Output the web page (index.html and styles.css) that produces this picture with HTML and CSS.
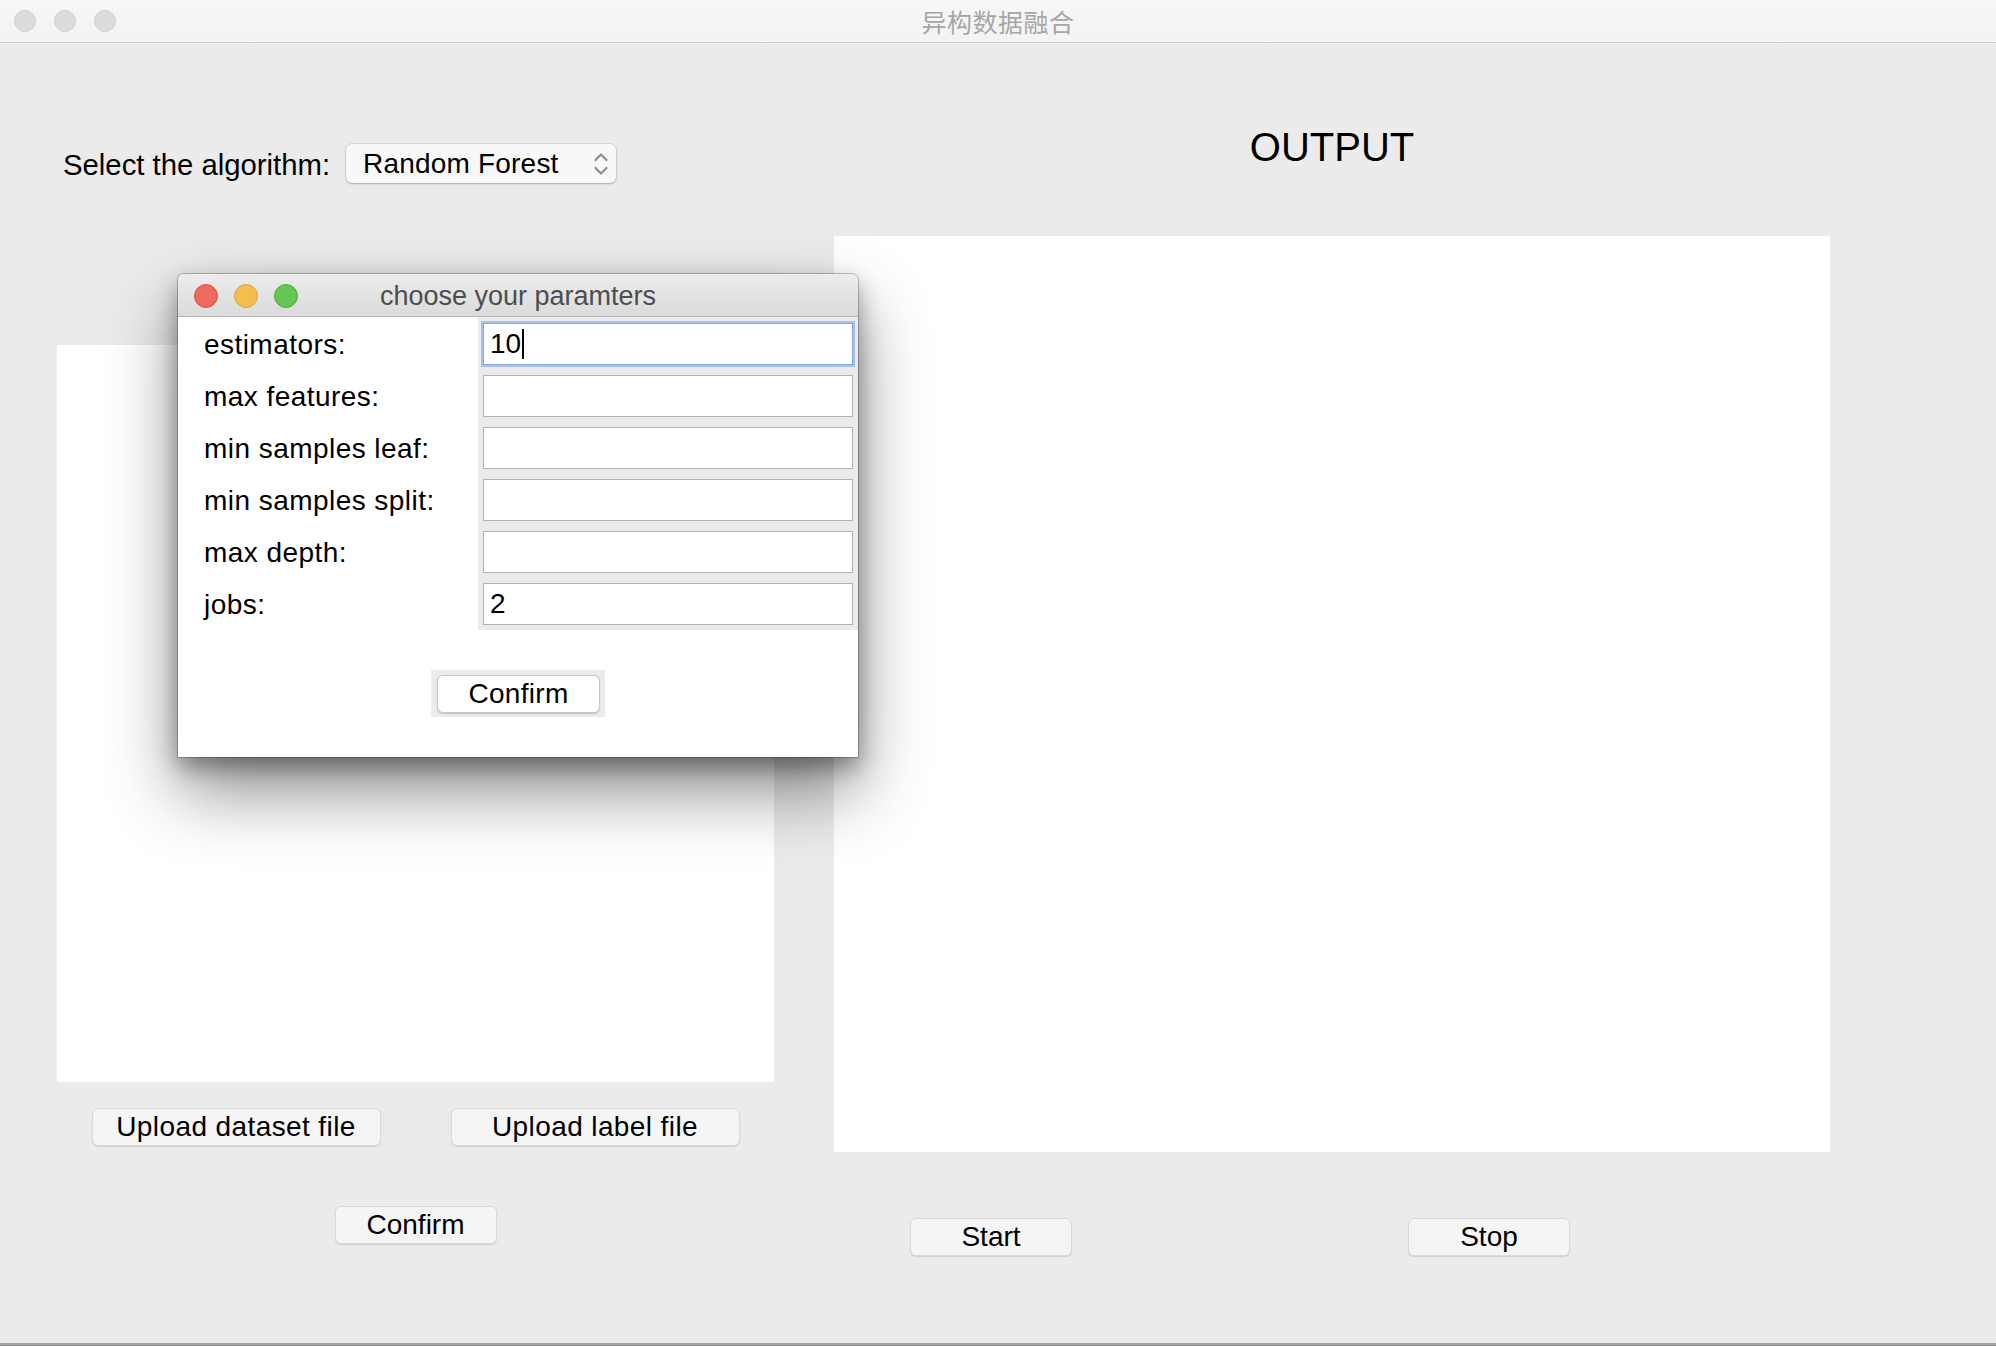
FILE: index.html
```html
<!DOCTYPE html>
<html lang="zh">
<head>
<meta charset="utf-8">
<title>异构数据融合</title>
<link rel="stylesheet" href="styles.css">
</head>
<body>
<div class="window">
  <div class="titlebar">
    <div class="lights">
      <span class="light gray"></span>
      <span class="light gray"></span>
      <span class="light gray"></span>
    </div>
    <div class="title">异构数据融合</div>
  </div>

  <div class="content">
    <div class="left-col">
      <div class="algo-row">
        <div class="algo-label">Select the algorithm:</div>
        <div class="combo">
          <span class="combo-text">Random Forest</span>
          <svg class="combo-arrows" width="16" height="26" viewBox="0 0 16 26">
            <path d="M2.5 9 L8 3.5 L13.5 9" fill="none" stroke="#8c8c8c" stroke-width="2.2" stroke-linecap="round" stroke-linejoin="round"/>
            <path d="M2.5 17 L8 22.5 L13.5 17" fill="none" stroke="#8c8c8c" stroke-width="2.2" stroke-linecap="round" stroke-linejoin="round"/>
          </svg>
        </div>
      </div>
      <div class="panel input-panel"></div>
      <div class="upload-row">
        <div class="btn upload">Upload dataset file</div>
        <div class="btn upload">Upload label file</div>
      </div>
      <div class="btn confirm-main">Confirm</div>
    </div>

    <div class="right-col">
      <div class="output-title">OUTPUT</div>
      <div class="panel output-panel"></div>
      <div class="run-row">
        <div class="btn run start">Start</div>
        <div class="btn run stop">Stop</div>
      </div>
    </div>
  </div>

  <div class="dialog">
    <div class="dlg-titlebar">
      <div class="lights dlg-lights">
        <span class="light red"></span>
        <span class="light yellow"></span>
        <span class="light green"></span>
      </div>
      <div class="dlg-title">choose your paramters</div>
    </div>
    <div class="params">
      <div class="plabel">estimators:</div>
      <div class="field focused">10<span class="caret"></span></div>
      <div class="plabel">max features:</div>
      <div class="field"></div>
      <div class="plabel">min samples leaf:</div>
      <div class="field"></div>
      <div class="plabel">min samples split:</div>
      <div class="field"></div>
      <div class="plabel">max depth:</div>
      <div class="field"></div>
      <div class="plabel">jobs:</div>
      <div class="field">2</div>
    </div>
    <div class="dlg-footer">
      <div class="btn-well">
        <div class="btn dlg-btn">Confirm</div>
      </div>
    </div>
  </div>
</div>
</body>
</html>
```

FILE: styles.css
```css
html, body {
  margin: 0;
  padding: 0;
}

body {
  width: 1996px;
  height: 1346px;
  background: #8f8f8f;
  font-family: "Liberation Sans", Arial, "Noto Sans CJK SC", sans-serif;
  color: #000;
  overflow: hidden;
}

.window {
  position: relative;
  width: 1996px;
  height: 1343px;
  background: #ebebeb;
  border-bottom: 2px solid #a3a3a3;
  display: flex;
  flex-direction: column;
}

.titlebar {
  position: relative;
  height: 42px;
  flex: none;
  background: linear-gradient(#f7f7f7, #f3f3f3);
  border-bottom: 1px solid #cdcdcd;
  display: flex;
  align-items: center;
  justify-content: center;
}

.lights {
  position: absolute;
  left: 14px;
  top: 10px;
  display: flex;
  gap: 18px;
}

.light {
  width: 22px;
  height: 22px;
  border-radius: 50%;
  box-sizing: border-box;
}

.light.gray {
  background: #dcdcdc;
  border: 1px solid #cfcfcf;
}

.light.red {
  background: #ec6a5e;
  border: 1px solid #d4544a;
}

.light.yellow {
  background: #f4be4f;
  border: 1px solid #d9a33e;
}

.light.green {
  background: #66c653;
  border: 1px solid #52a93f;
}

.title {
  font-family: "Noto Sans CJK SC", "Liberation Sans", sans-serif;
  font-size: 25px;
  color: #a6a6a6;
  line-height: 42px;
  letter-spacing: 0.5px;
}

.content {
  display: flex;
  padding-left: 57px;
  flex: 1;
}

.left-col {
  width: 717px;
  display: flex;
  flex-direction: column;
}

.algo-row {
  margin-top: 101px;
  height: 39px;
  display: flex;
  align-items: center;
}

.algo-label {
  width: 289px;
  padding-left: 6px;
  box-sizing: border-box;
  font-size: 29.3px;
  padding-top: 3px;
  white-space: nowrap;
}

.combo {
  width: 270px;
  height: 39px;
  box-sizing: border-box;
  border-radius: 6px;
  background: #f8f8f8;
  box-shadow: 0 0 0 1px rgba(0, 0, 0, 0.07), 0 1px 2px rgba(0, 0, 0, 0.22);
  display: flex;
  align-items: center;
  justify-content: space-between;
  padding: 0 7px 0 17px;
}

.combo-text {
  font-size: 28px;
  letter-spacing: 0.2px;
}

.panel {
  background: #fff;
}

.input-panel {
  margin-top: 162px;
  height: 737px;
}

.upload-row {
  margin-top: 26px;
  display: flex;
  justify-content: center;
  gap: 70px;
}

.btn {
  height: 38px;
  box-sizing: border-box;
  border-radius: 6px;
  background: #f5f5f5;
  border: 1px solid #d9d9d9;
  box-shadow: 0 1px 1px rgba(0, 0, 0, 0.12);
  font-size: 28px;
  display: flex;
  align-items: center;
  justify-content: center;
  white-space: nowrap;
}

.upload {
  width: 289px;
  letter-spacing: 0.4px;
}

.confirm-main {
  margin-top: 60px;
  width: 162px;
  align-self: center;
}

.right-col {
  margin-left: 60px;
  width: 996px;
  display: flex;
  flex-direction: column;
}

.output-title {
  margin-top: 80px;
  font-size: 40px;
  line-height: 48px;
  text-align: center;
}

.output-panel {
  margin-top: 65px;
  height: 916px;
}

.run-row {
  margin-top: 66px;
  display: flex;
  padding-left: 76px;
  gap: 336px;
}

.run {
  width: 162px;
}

/* Dialog floating over the window */
.dialog {
  position: absolute;
  left: 178px;
  top: 274px;
  width: 680px;
  height: 483px;
  background: #fff;
  border-radius: 6px 6px 0 0;
  box-shadow: 0 0 0 1px rgba(0, 0, 0, 0.22), 0 10px 22px rgba(0, 0, 0, 0.35), 0 34px 70px rgba(0, 0, 0, 0.45);
  display: flex;
  flex-direction: column;
  overflow: hidden;
}

.dlg-titlebar {
  position: relative;
  height: 42px;
  flex: none;
  background: linear-gradient(#ececec, #dbdbdb);
  border-bottom: 1px solid #b9b9b9;
  display: flex;
  align-items: center;
  justify-content: center;
}

.dlg-lights {
  left: 16px;
  top: 10px;
  gap: 16px;
}

.dlg-lights .light {
  width: 24px;
  height: 24px;
}

.dlg-title {
  font-size: 27px;
  color: #4d4d4d;
  padding-top: 2px;
}

.params {
  display: grid;
  grid-template-columns: 300px 380px;
  grid-auto-rows: 42px;
  row-gap: 10px;
  padding: 6px 0 5px;
  background: linear-gradient(to right, #fff 300px, #ebebeb 300px);
}

.plabel {
  font-size: 28px;
  letter-spacing: 0.45px;
  padding-left: 26px;
  padding-top: 2px;
  display: flex;
  align-items: center;
  white-space: nowrap;
}

.field {
  margin: 0 5px;
  background: #fff;
  border: 1px solid #b3b3b3;
  box-sizing: border-box;
  font-size: 28px;
  display: flex;
  align-items: center;
  padding-left: 6px;
}

.field.focused {
  border-color: #84a6e6;
  box-shadow: 0 0 0 2px #a6c0f0;
}

.caret {
  display: inline-block;
  width: 2px;
  height: 30px;
  background: #000;
  margin-left: 1px;
}

.dlg-footer {
  display: flex;
  justify-content: center;
  padding-top: 40px;
}

.btn-well {
  background: #ebebeb;
  padding: 5px 5px 4px 6px;
}

.dlg-btn {
  width: 163px;
  background: #fff;
  border: 1px solid #c6c6c6;
  box-shadow: 0 1px 1px rgba(0, 0, 0, 0.18);
  letter-spacing: 0.3px;
}
```
